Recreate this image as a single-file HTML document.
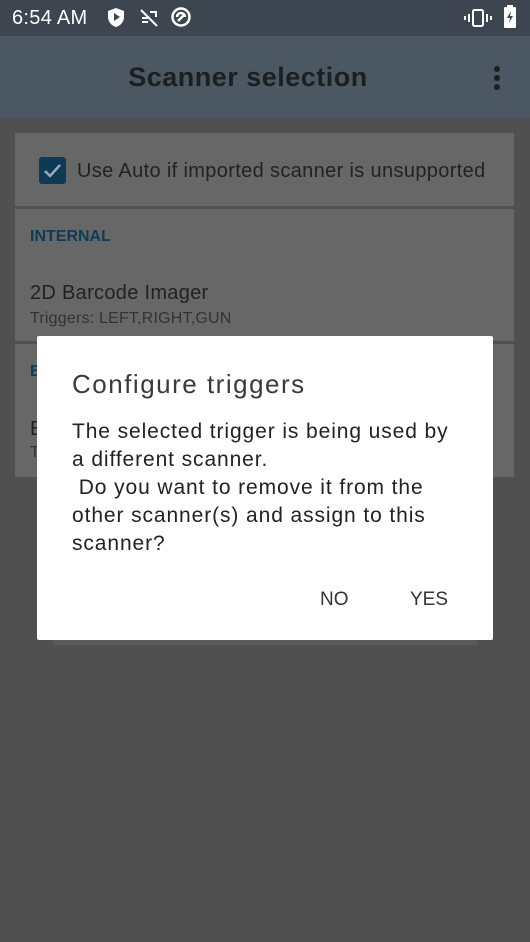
<!DOCTYPE html>
<html><head><style>
*{margin:0;padding:0;box-sizing:border-box}
body{width:530px;height:942px;background:#505050;font-family:"Liberation Sans",sans-serif;position:relative;overflow:hidden}
.sb{position:absolute;top:0;left:0;width:530px;height:36px;background:#3d4650;color:#fff}
.ab{position:absolute;top:36px;left:0;width:530px;height:82px;background:#4b5763}
.ab h1{position:absolute;left:0;width:496px;text-align:center;top:26px;font-size:27px;font-weight:bold;color:#1c1f22;letter-spacing:0.5px}
.card{position:absolute;left:15px;width:499px;background:#676767}
.t{position:absolute;color:#222}
.dlg{position:absolute;left:37px;top:336px;width:456px;height:304px;background:#fff;border-radius:2px}
</style></head><body>
<div class="sb">
<div style="position:absolute;left:12px;top:7px;font-size:20px;letter-spacing:0.3px">6:54 AM</div>
<svg style="position:absolute;left:107px;top:7px" width="18" height="21" viewBox="0 0 18 21"><path d="M9 1L1 4v6c0 5 4 9 8 10 4-1 8-5 8-10V4z" fill="#fff"/><path d="M7 6v8l6-4z" fill="#3d4650"/></svg>
<svg style="position:absolute;left:139px;top:8px" width="20" height="20" viewBox="0 0 20 20"><g stroke="#fff" stroke-width="2" fill="none"><path d="M2 2l16 16M3 10h8M3 14h6M11 4h6v5"/></g></svg>
<svg style="position:absolute;left:170px;top:6px" width="22" height="22" viewBox="0 0 22 22"><circle cx="11" cy="11" r="8.5" stroke="#fff" stroke-width="2.5" fill="none"/><path d="M7 11a4 4 0 0 1 8 0M8 15l7-7" stroke="#fff" stroke-width="2.5" fill="none"/></svg>
<svg style="position:absolute;left:463px;top:8px" width="30" height="20" viewBox="0 0 30 20"><rect x="10" y="2" width="10" height="16" rx="1.5" stroke="#fff" stroke-width="2" fill="none"/><path d="M6 6v8M24 6v8M2 8v4M28 8v4" stroke="#fff" stroke-width="2"/></svg>
<svg style="position:absolute;left:503px;top:5px" width="14" height="24" viewBox="0 0 14 24"><rect x="4" y="0" width="6" height="3" fill="#fff"/><rect x="1" y="2" width="12" height="21" rx="1" fill="#fff"/><path d="M8 6l-4 7h3l-1 5 4-7H7z" fill="#3d4650"/></svg>
</div>
<div class="ab"><h1>Scanner selection</h1>
<div style="position:absolute;left:494px;top:30px;width:6px">
<div style="width:6px;height:6px;border-radius:3px;background:#1c1f22;margin-bottom:3px"></div>
<div style="width:6px;height:6px;border-radius:3px;background:#1c1f22;margin-bottom:3px"></div>
<div style="width:6px;height:6px;border-radius:3px;background:#1c1f22"></div></div></div>
<div class="card" style="top:133px;height:73px"></div>
<div class="card" style="top:209px;height:132px"></div>
<div class="card" style="top:344px;height:133px"></div>
<div style="position:absolute;left:53px;top:477px;width:424px;height:168px;background:#5a5a5a;border-radius:2px"></div>
<div style="position:absolute;left:39px;top:157px;width:27px;height:27px;background:#0e3a58;border-radius:3px"></div>
<svg style="position:absolute;left:39px;top:157px" width="27" height="27"><path d="M6 14l5 5 10-11" stroke="#9ab" stroke-width="2.5" fill="none"/></svg>
<div class="t" style="left:77px;top:160px;font-size:20px;letter-spacing:0.35px">Use Auto if imported scanner is unsupported</div>
<div class="t" style="left:30px;top:228px;font-size:16px;font-weight:bold;color:#0d3b58">INTERNAL</div>
<div class="t" style="left:30px;top:282px;font-size:20px;letter-spacing:0.3px">2D Barcode Imager</div>
<div class="t" style="left:30px;top:310px;font-size:16px;color:#333;letter-spacing:0.2px">Triggers: LEFT,RIGHT,GUN</div>
<div class="t" style="left:30px;top:363px;font-size:16px;font-weight:bold;color:#0d3b58">B</div>
<div class="t" style="left:30px;top:418px;font-size:20px">B</div>
<div class="t" style="left:30px;top:444px;font-size:16px;color:#333">T</div>
<div class="dlg">
<div class="t" style="left:35px;top:33px;font-size:26px;color:#3a3a3a;letter-spacing:1.5px">Configure triggers</div>
<div class="t" style="left:35px;top:82px;font-size:21px;line-height:28px;color:#222;white-space:pre;letter-spacing:0.9px">The selected trigger is being used by
a different scanner.
 Do you want to remove it from the
other scanner(s) and assign to this
scanner?</div>
<div class="t" style="left:283px;top:253px;font-size:19px;color:#333">NO</div>
<div class="t" style="left:373px;top:253px;font-size:19px;color:#333">YES</div>
</div>
</body></html>
